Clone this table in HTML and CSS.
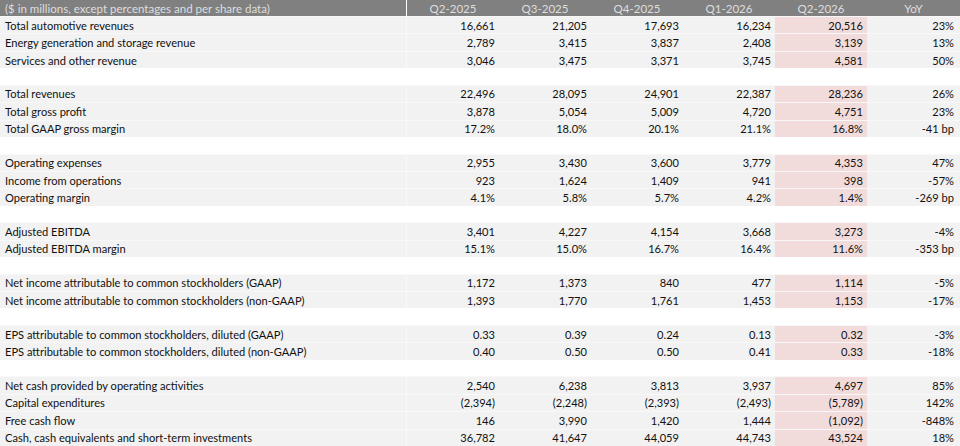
FILE: index.html
```html
<!DOCTYPE html>
<html>
<head>
<meta charset="utf-8">
<link rel="stylesheet" href="styles.css">
</head>
<body>
<div class="sheet">
  <div class="row head">
    <div class="c lab">($ in millions, except percentages and per share data)</div>
    <div class="c">Q2-2025</div><div class="c">Q3-2025</div><div class="c">Q4-2025</div><div class="c">Q1-2026</div><div class="c">Q2-2026</div><div class="c">YoY</div>
  </div>
  <div class="row"><div class="c lab">Total automotive revenues</div><div class="c">16,661</div><div class="c">21,205</div><div class="c">17,693</div><div class="c">16,234</div><div class="c hl">20,516</div><div class="c yoy">23%</div></div>
  <div class="row"><div class="c lab">Energy generation and storage revenue</div><div class="c">2,789</div><div class="c">3,415</div><div class="c">3,837</div><div class="c">2,408</div><div class="c hl">3,139</div><div class="c yoy">13%</div></div>
  <div class="row"><div class="c lab">Services and other revenue</div><div class="c">3,046</div><div class="c">3,475</div><div class="c">3,371</div><div class="c">3,745</div><div class="c hl">4,581</div><div class="c yoy">50%</div></div>
  <div class="row blank"></div>
  <div class="row"><div class="c lab">Total revenues</div><div class="c">22,496</div><div class="c">28,095</div><div class="c">24,901</div><div class="c">22,387</div><div class="c hl">28,236</div><div class="c yoy">26%</div></div>
  <div class="row"><div class="c lab">Total gross profit</div><div class="c">3,878</div><div class="c">5,054</div><div class="c">5,009</div><div class="c">4,720</div><div class="c hl">4,751</div><div class="c yoy">23%</div></div>
  <div class="row"><div class="c lab">Total GAAP gross margin</div><div class="c">17.2%</div><div class="c">18.0%</div><div class="c">20.1%</div><div class="c">21.1%</div><div class="c hl">16.8%</div><div class="c yoy">-41 bp</div></div>
  <div class="row blank"></div>
  <div class="row"><div class="c lab">Operating expenses</div><div class="c">2,955</div><div class="c">3,430</div><div class="c">3,600</div><div class="c">3,779</div><div class="c hl">4,353</div><div class="c yoy">47%</div></div>
  <div class="row"><div class="c lab">Income from operations</div><div class="c">923</div><div class="c">1,624</div><div class="c">1,409</div><div class="c">941</div><div class="c hl">398</div><div class="c yoy">-57%</div></div>
  <div class="row"><div class="c lab">Operating margin</div><div class="c">4.1%</div><div class="c">5.8%</div><div class="c">5.7%</div><div class="c">4.2%</div><div class="c hl">1.4%</div><div class="c yoy">-269 bp</div></div>
  <div class="row blank"></div>
  <div class="row"><div class="c lab">Adjusted EBITDA</div><div class="c">3,401</div><div class="c">4,227</div><div class="c">4,154</div><div class="c">3,668</div><div class="c hl">3,273</div><div class="c yoy">-4%</div></div>
  <div class="row"><div class="c lab">Adjusted EBITDA margin</div><div class="c">15.1%</div><div class="c">15.0%</div><div class="c">16.7%</div><div class="c">16.4%</div><div class="c hl">11.6%</div><div class="c yoy">-353 bp</div></div>
  <div class="row blank"></div>
  <div class="row"><div class="c lab">Net income attributable to common stockholders (GAAP)</div><div class="c">1,172</div><div class="c">1,373</div><div class="c">840</div><div class="c">477</div><div class="c hl">1,114</div><div class="c yoy">-5%</div></div>
  <div class="row"><div class="c lab">Net income attributable to common stockholders (non-GAAP)</div><div class="c">1,393</div><div class="c">1,770</div><div class="c">1,761</div><div class="c">1,453</div><div class="c hl">1,153</div><div class="c yoy">-17%</div></div>
  <div class="row blank"></div>
  <div class="row"><div class="c lab">EPS attributable to common stockholders, diluted (GAAP)</div><div class="c">0.33</div><div class="c">0.39</div><div class="c">0.24</div><div class="c">0.13</div><div class="c hl">0.32</div><div class="c yoy">-3%</div></div>
  <div class="row"><div class="c lab">EPS attributable to common stockholders, diluted (non-GAAP)</div><div class="c">0.40</div><div class="c">0.50</div><div class="c">0.50</div><div class="c">0.41</div><div class="c hl">0.33</div><div class="c yoy">-18%</div></div>
  <div class="row blank"></div>
  <div class="row"><div class="c lab">Net cash provided by operating activities</div><div class="c">2,540</div><div class="c">6,238</div><div class="c">3,813</div><div class="c">3,937</div><div class="c hl">4,697</div><div class="c yoy">85%</div></div>
  <div class="row"><div class="c lab">Capital expenditures</div><div class="c">(2,394)</div><div class="c">(2,248)</div><div class="c">(2,393)</div><div class="c">(2,493)</div><div class="c hl">(5,789)</div><div class="c yoy">142%</div></div>
  <div class="row"><div class="c lab">Free cash flow</div><div class="c">146</div><div class="c">3,990</div><div class="c">1,420</div><div class="c">1,444</div><div class="c hl">(1,092)</div><div class="c yoy">-848%</div></div>
  <div class="row"><div class="c lab">Cash, cash equivalents and short-term investments</div><div class="c">36,782</div><div class="c">41,647</div><div class="c">44,059</div><div class="c">44,743</div><div class="c hl">43,524</div><div class="c yoy">18%</div></div>
</div>
</body>
</html>
```

FILE: styles.css
```css
html, body {
  margin: 0;
  padding: 0;
  background: #ffffff;
}
.sheet {
  width: 960px;
  height: 446px;
  display: flex;
  flex-direction: column;
  font-family: "Lato", "Liberation Sans", sans-serif;
  font-size: 11.1px;
  color: #111111;
  overflow: hidden;
}
.row {
  flex: 1 1 0;
  display: grid;
  grid-template-columns: 407px 92px 92px 92px 92px 92px 93px;
  background: #f2f2f2;
  border-top: 1px solid #f8f8f8;
  box-sizing: border-box;
}
.row.blank {
  background: #ffffff;
  border-top: none;
}
.row.head {
  flex: 0 0 16px;
  background: #808080;
  color: #dedede;
  border-top: none;
  font-size: 11.5px;
}
.c {
  display: flex;
  align-items: center;
  justify-content: flex-end;
  padding: 0 4px;
  white-space: nowrap;
  overflow: hidden;
}
.c.lab {
  justify-content: flex-start;
  padding: 0 5px;
  border-right: 1px solid #f9f9f9;
}
.head .c {
  justify-content: center;
}
.head .c.lab {
  justify-content: flex-start;
  border-right: 1px solid #ffffff;
}
.c.hl {
  background: #f2dcdb;
}
.c.yoy {
  padding-right: 6px;
}
```
